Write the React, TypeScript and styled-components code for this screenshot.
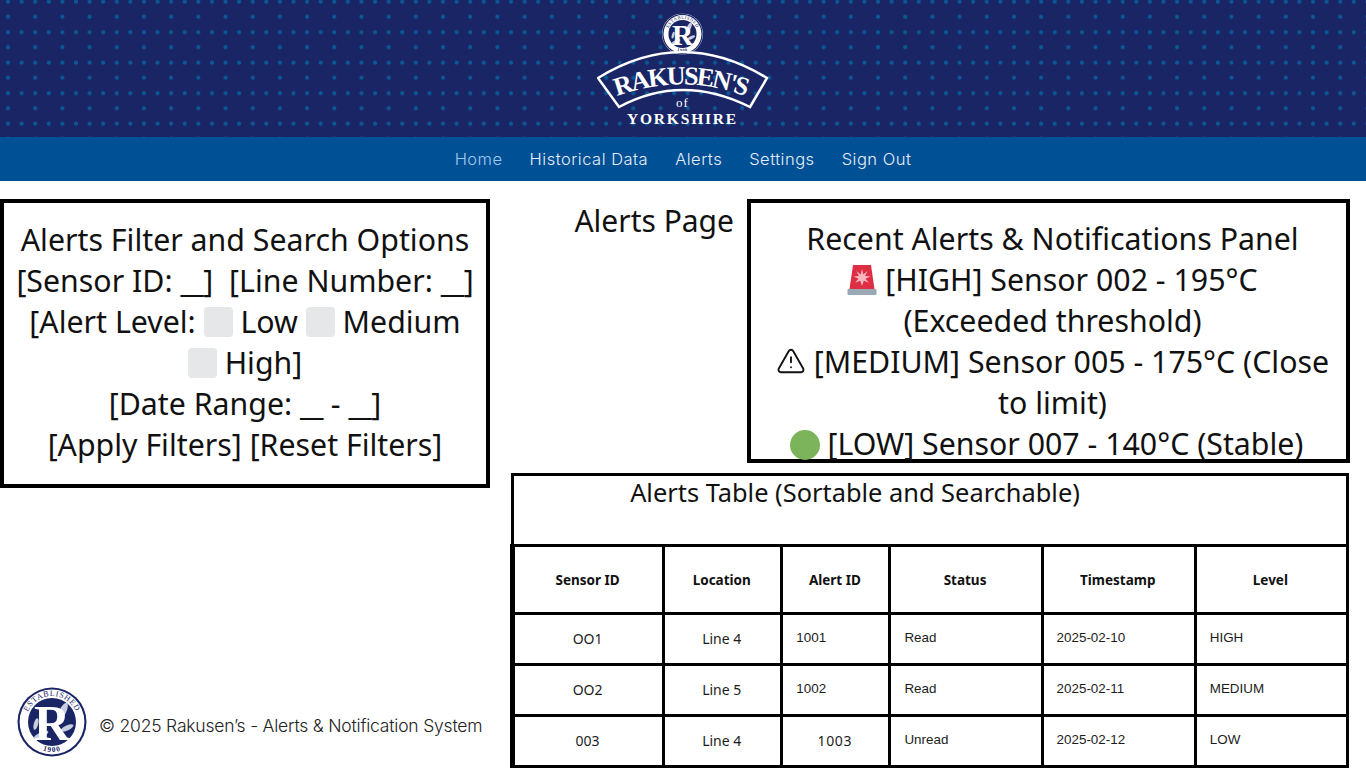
import styled, { createGlobalStyle } from "styled-components";
import { TriangleAlert } from "lucide-react";

const GlobalStyle = createGlobalStyle`
    html, body {
        margin: 0;
        padding: 0;
        background: #fff;
        overflow: hidden;
    }
    * {
        box-sizing: border-box;
    }
`;

const Page = styled.div`
    width: 1366px;
    height: 768px;
    display: flex;
    flex-direction: column;
    font-family: "Noto Sans", "Open Sans", sans-serif;
    color: #111;
    overflow: hidden;
`;

const Banner = styled.header`
    height: 137px;
    flex: none;
    display: flex;
    justify-content: center;
    padding-top: 10px;
    background-color: #1a2566;
    background-image: radial-gradient(circle, #0a5896 1.7px, transparent 2.4px),
        radial-gradient(circle, #0a5896 1.7px, transparent 2.4px),
        radial-gradient(circle, #0a5896 1.7px, transparent 2.4px);
    background-size: 27.2px 30.5px;
    background-position: -5.6px -13.55px, 8px -13.55px, -5.6px 1.45px;
`;

const Nav = styled.nav`
    height: 44px;
    flex: none;
    display: flex;
    justify-content: center;
    align-items: center;
    gap: 27px;
    background: #005096;
`;

const NavLink = styled.a<{ $active?: boolean }>`
    font-family: "Inter", "Noto Sans", sans-serif;
    font-size: 16.5px;
    font-weight: 300;
    letter-spacing: 0.5px;
    color: ${(props) => (props.$active ? "#a3c8ee" : "#e6eef8")};
`;

const Main = styled.main`
    flex: 1;
    min-height: 0;
    display: grid;
    grid-template-columns: 490px 839px;
    column-gap: 21px;
    padding-top: 18px;
`;

const LeftColumn = styled.div`
    display: flex;
    flex-direction: column;
    justify-content: space-between;
    padding-bottom: 11px;
`;

const RightColumn = styled.div`
    display: flex;
    flex-direction: column;
    gap: 10px;
`;

const TopRow = styled.div`
    display: flex;
    justify-content: space-between;
`;

const PageTitle = styled.h1`
    margin: 1px 13px 0 0;
    flex: 1;
    text-align: right;
    font-size: 30px;
    line-height: 41px;
    font-weight: 400;
`;

const Panel = styled.section<{ $width: string; $height: string; $pad: string }>`
    width: ${(props) => props.$width};
    height: ${(props) => props.$height};
    padding: ${(props) => props.$pad};
    flex: none;
    border: 4px solid #000;
    text-align: center;
    font-size: 30.3px;
    line-height: 41px;
`;

const Blank = styled.span`
    letter-spacing: -3.5px;
    margin-right: 3px;
`;

const Tick = styled.span`
    display: inline-block;
    width: 29px;
    height: 30px;
    border-radius: 4px;
    background: #e6e7e8;
    vertical-align: -4px;
`;

const LastLine = styled.span`
    display: block;
    margin-left: -12px;
`;

const GreenDot = styled.span`
    display: inline-block;
    width: 30px;
    height: 30px;
    border-radius: 50%;
    background: #7cb45c;
    vertical-align: -5px;
`;

const Siren = styled.svg`
    width: 30px;
    height: 30px;
    vertical-align: -4px;
`;

const Warning = styled(TriangleAlert)`
    width: 30px;
    height: 30px;
    vertical-align: -3px;
    color: #111;
`;

const TableTitleBar = styled.div`
    height: 71px;
    width: 838px;
    border: 3px solid #000;
    border-bottom: 0;
    padding: 0 150px 0 0;
    text-align: center;
    font-size: 25.4px;
    line-height: 32px;
`;

const AlertsTable = styled.table`
    width: 839px;
    margin-left: -1px;
    border-collapse: collapse;
    table-layout: fixed;
    border-left: 5px solid #000;
`;

const HeadCell = styled.th<{ $width: number }>`
    width: ${(props) => props.$width}px;
    height: 68px;
    padding: 0 2px 0 0;
    border: 3px solid #000;
    font-size: 13.5px;
    font-weight: 700;
    text-align: center;
`;

const Cell = styled.td<{ $plain?: boolean; $center?: boolean; $wide?: boolean }>`
    height: 51px;
    padding: ${(props) => (props.$plain ? "0 0 4px 13px" : "0 2px 2px 0")};
    border: 3px solid #000;
    text-align: ${(props) => (props.$center ? "center" : "left")};
    font-family: ${(props) =>
        props.$plain ? '"Liberation Sans", Arial, sans-serif' : '"Noto Sans", sans-serif'};
    font-size: ${(props) => (props.$plain ? "13.4px" : "14px")};
    letter-spacing: ${(props) => (props.$wide ? "0.7px" : "0")};
    color: #1c1c1c;
`;

const Footer = styled.footer`
    display: flex;
    align-items: center;
    gap: 12px;
    padding-left: 17px;
`;

const FooterSeal = styled.div`
    flex: none;
    width: 70px;
    height: 70px;
`;

const FooterText = styled.span`
    margin-top: 6px;
    font-family: "Inter", "Noto Sans", sans-serif;
    font-size: 17.5px;
    font-weight: 300;
    letter-spacing: -0.2px;
    color: #222;
    white-space: nowrap;
`;

const NAVY = "#1a2566";

// round badge with the R, used in the banner and in the footer
function Seal({ x, y, size }: { x?: number; y?: number; size: number }) {
    return (
        <svg x={x} y={y} width={size} height={size} viewBox="0 0 70 70">
            <defs>
                <path id="seal-top" d="M9.96 42 A26 26 0 1 1 60.04 42" />
                <path id="seal-bottom" d="M9.02 50 A30 30 0 0 0 60.98 50" />
            </defs>
            <circle cx="35" cy="35" r="35" fill="#fff" />
            <circle cx="35" cy="35" r="34.5" fill={NAVY} />
            <circle cx="35" cy="35" r="32.4" fill="#fff" />
            <circle cx="35" cy="35" r="24" fill={NAVY} />
            <text fontFamily="Liberation Serif, serif" fontSize="8" fill={NAVY} letterSpacing="0.7">
                <textPath href="#seal-top" startOffset="50%" textAnchor="middle">
                    ESTABLISHED
                </textPath>
            </text>
            <text fontFamily="Liberation Serif, serif" fontSize="7.4" fontWeight="700" fill={NAVY} letterSpacing="1">
                <textPath href="#seal-bottom" startOffset="50%" textAnchor="middle">
                    1900
                </textPath>
            </text>
            <g fill="#c9cde0">
                <ellipse cx="46" cy="24" rx="3.4" ry="9" transform="rotate(25 46 24)" />
                <ellipse cx="50" cy="41" rx="7" ry="2.6" transform="rotate(-25 50 41)" />
                <ellipse cx="24" cy="48" rx="8" ry="2.6" transform="rotate(-25 24 48)" />
                <ellipse cx="19" cy="37" rx="2.2" ry="6" transform="rotate(15 19 37)" />
            </g>
            <text
                x="35"
                y="53"
                textAnchor="middle"
                fontFamily="Liberation Serif, serif"
                fontSize="50"
                fontWeight="700"
                fill="#fff"
            >
                R
            </text>
        </svg>
    );
}

function BannerLogo() {
    return (
        <svg width="172" height="118" viewBox="0 0 172 118">
            <defs>
                <path id="ribbon-line" d="M18 87 Q85 62 151 87" />
            </defs>
            <Seal x={65} y={3.5} size={41} />
            <path
                d="M1 68 Q85 16 170 68 L153 97 Q85 63 22 97 Z"
                fill="none"
                stroke="#fff"
                strokeWidth="2.5"
                strokeLinejoin="miter"
            />
            <text fontFamily="Liberation Serif, serif" fontSize="26" fontWeight="700" fill="#fff">
                <textPath href="#ribbon-line" startOffset="50%" textAnchor="middle" textLength="132">
                    RAKUSEN'S
                </textPath>
            </text>
            <text
                x="85.5"
                y="97"
                textAnchor="middle"
                fontFamily="Liberation Serif, serif"
                fontSize="13"
                fill="#fff"
                letterSpacing="1.2"
            >
                of
            </text>
            <text
                x="85.5"
                y="114"
                textAnchor="middle"
                fontFamily="Liberation Serif, serif"
                fontSize="15.5"
                fontWeight="700"
                fill="#fff"
                letterSpacing="1.8"
            >
                YORKSHIRE
            </text>
        </svg>
    );
}

function SirenIcon() {
    return (
        <Siren viewBox="0 0 30 30">
            <path d="M6 0 H24 L27.5 24 H2.5 Z" fill="#dd2e44" />
            <path
                d="M15 4 L16.3 9.4 L20.5 6 L18.1 11 L23.5 11.5 L18.4 13.7 L22 17.8 L16.8 15.8 L15 21 L13.2 15.8 L8 17.8 L11.6 13.7 L6.5 11.5 L11.9 11 L9.5 6 L13.7 9.4 Z"
                fill="#f7b6c0"
            />
            <rect x="0.5" y="24" width="29" height="6" rx="1" fill="#99aab5" />
        </Siren>
    );
}

const columns = [
    { label: "Sensor ID", width: 151 },
    { label: "Location", width: 118 },
    { label: "Alert ID", width: 108 },
    { label: "Status", width: 152 },
    { label: "Timestamp", width: 153 },
    { label: "Level", width: 152 },
];

const rows = [
    { sensor: "OO1", line: "Line 4", id: "1001", status: "Read", time: "2025-02-10", level: "HIGH" },
    { sensor: "OO2", line: "Line 5", id: "1002", status: "Read", time: "2025-02-11", level: "MEDIUM" },
    { sensor: "003", line: "Line 4", id: "1003", status: "Unread", time: "2025-02-12", level: "LOW" },
];

function App() {
    return (
        <Page>
            <GlobalStyle />
            <Banner>
                <BannerLogo />
            </Banner>
            <Nav>
                <NavLink $active>Home</NavLink>
                <NavLink>Historical Data</NavLink>
                <NavLink>Alerts</NavLink>
                <NavLink>Settings</NavLink>
                <NavLink>Sign Out</NavLink>
            </Nav>
            <Main>
                <LeftColumn>
                    <Panel $width="490px" $height="289px" $pad="16px 10px 0">
                        Alerts Filter and Search Options
                        <br />
                        [Sensor ID: <Blank>__</Blank>]&nbsp; [Line Number: <Blank>__</Blank>]
                        <br />
                        [Alert Level: <Tick /> Low <Tick /> Medium
                        <br />
                        <Tick /> High]
                        <br />
                        [Date Range: <Blank>__</Blank> - <Blank>__</Blank>]
                        <br />
                        [Apply Filters] [Reset Filters]
                    </Panel>
                    <Footer>
                        <FooterSeal>
                            <Seal size={70} />
                        </FooterSeal>
                        <FooterText>© 2025 Rakusen’s - Alerts &amp; Notification System</FooterText>
                    </Footer>
                </LeftColumn>
                <RightColumn>
                    <TopRow>
                        <PageTitle>Alerts Page</PageTitle>
                        <Panel $width="603px" $height="264px" $pad="15px 10px 0 18px">
                            Recent Alerts &amp; Notifications Panel
                            <br />
                            <SirenIcon /> [HIGH] Sensor 002 - 195°C
                            <br />
                            (Exceeded threshold)
                            <br />
                            <Warning strokeWidth={1.5} /> [MEDIUM] Sensor 005 - 175°C (Close
                            <br />
                            to limit)
                            <LastLine>
                                <GreenDot /> [LOW] Sensor 007 - 140°C (Stable)
                            </LastLine>
                        </Panel>
                    </TopRow>
                    <div>
                        <TableTitleBar>Alerts Table (Sortable and Searchable)</TableTitleBar>
                        <AlertsTable>
                            <thead>
                                <tr>
                                    {columns.map((col) => (
                                        <HeadCell key={col.label} $width={col.width}>
                                            {col.label}
                                        </HeadCell>
                                    ))}
                                </tr>
                            </thead>
                            <tbody>
                                {rows.map((row) => (
                                    <tr key={row.id}>
                                        <Cell $center>{row.sensor}</Cell>
                                        <Cell $center>{row.line}</Cell>
                                        {row.id === "1003" ? (
                                            <Cell $center $wide>
                                                {row.id}
                                            </Cell>
                                        ) : (
                                            <Cell $plain>{row.id}</Cell>
                                        )}
                                        <Cell $plain>{row.status}</Cell>
                                        <Cell $plain>{row.time}</Cell>
                                        <Cell $plain>{row.level}</Cell>
                                    </tr>
                                ))}
                            </tbody>
                        </AlertsTable>
                    </div>
                </RightColumn>
            </Main>
        </Page>
    );
}

export default App;
